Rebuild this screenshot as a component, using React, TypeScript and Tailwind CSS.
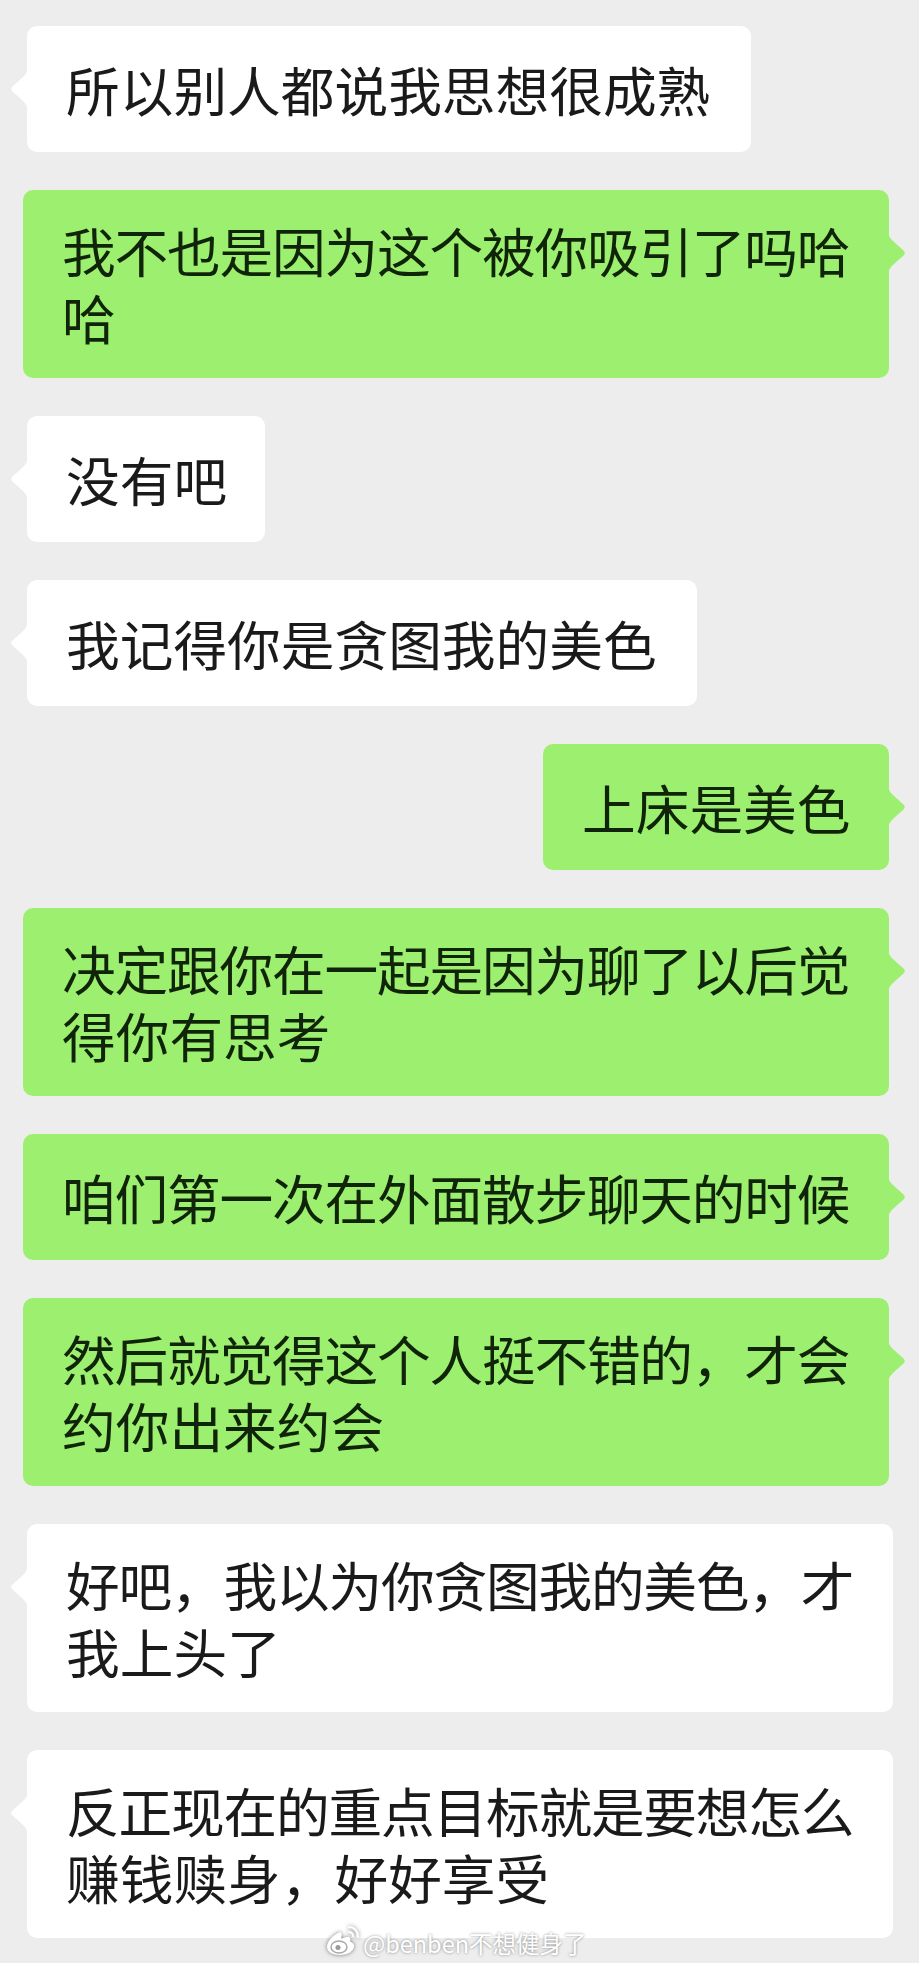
const cjk = "font-['Noto_Sans_CJK_SC','Noto_Sans',sans-serif]";

type Msg = {
    lines: string[];
    me?: boolean;
    width: string;
};

const messages: Msg[] = [
    { lines: ["所以别人都说我思想很成熟"], width: "w-[724px]" },
    { lines: ["我不也是因为这个被你吸引了吗哈", "哈"], me: true, width: "w-[866px]" },
    { lines: ["没有吧"], width: "w-[238px]" },
    { lines: ["我记得你是贪图我的美色"], width: "w-[670px]" },
    { lines: ["上床是美色"], me: true, width: "w-[346px]" },
    { lines: ["决定跟你在一起是因为聊了以后觉", "得你有思考"], me: true, width: "w-[866px]" },
    { lines: ["咱们第一次在外面散步聊天的时候"], me: true, width: "w-[866px]" },
    { lines: ["然后就觉得这个人挺不错的，才会", "约你出来约会"], me: true, width: "w-[866px]" },
    { lines: ["好吧，我以为你贪图我的美色，才", "我上头了"], width: "w-[866px]" },
    { lines: ["反正现在的重点目标就是要想怎么", "赚钱赎身，好好享受"], width: "w-[866px]" },
];

function Tail({ me }: { me?: boolean }) {
    return (
        <svg
            viewBox="0 0 18 40"
            className={me ? "absolute top-[43px] left-full w-[18px] h-[40px] -ml-px" : "absolute top-[43px] right-full w-[18px] h-[40px] -mr-px -scale-x-100"}
        >
            <path
                d="M0 0 C1 4 3 6 6 9 L15.5 17.5 C17.2 19 17.2 21 15.5 22.5 L6 31 C3 34 1 36 0 40 Z"
                fill={me ? "#9def6f" : "#ffffff"}
            />
        </svg>
    );
}

function Bubble({ msg }: { msg: Msg }) {
    return (
        <div className={msg.me ? "flex justify-end pr-[30px]" : "flex pl-[27px]"}>
            <div
                className={`relative ${msg.width} min-h-[126px] rounded-[10px] flex items-center pt-[26px] pb-[28px] pl-[39px] ${msg.me ? "bg-[#9def6f] text-[#0f2408]" : "bg-white text-[#1a1a1a]"}`}
            >
                <Tail me={msg.me} />
                <div className="text-[53.7px] leading-[67px] whitespace-nowrap">
                    {msg.lines.map((line) => (
                        <div key={line} className={line.length === 15 ? "tracking-[-1.2px]" : ""}>
                            {line}
                        </div>
                    ))}
                </div>
            </div>
        </div>
    );
}

function WeiboLogo() {
    return (
        <svg viewBox="0 0 36 32" className="w-[36px] h-[32px] drop-shadow-[0_0_2px_rgba(0,0,0,0.5)]" fill="none">
            <path
                d="M15 7 C8 10 2 16 2 22 C2 27 8 30 15 30 C23 30 29 26 29 21 C29 18 26 17 25 16.5 C26 14 25 12 23 12 C21 11.5 18 13 16 13.5 C17 10 17 8 15 7 Z"
                fill="#ffffff"
            />
            <ellipse cx="14" cy="22" rx="8" ry="6" fill="#ffffff" stroke="#a8a8a8" strokeWidth="1.5" />
            <circle cx="13" cy="22.5" r="2.5" fill="#9a9a9a" />
            <path d="M24 2 C29 2 33 6 33 12" stroke="#ffffff" strokeWidth="2" strokeLinecap="round" />
            <path d="M24 7 C26.5 7 28 9 28 11" stroke="#ffffff" strokeWidth="2" strokeLinecap="round" />
        </svg>
    );
}

export default function App() {
    return (
        <div className={`relative h-[1963px] w-[919px] overflow-hidden bg-[#ededed] ${cjk}`}>
            <div className="flex flex-col gap-[38px] pt-[26px]">
                {messages.map((msg) => (
                    <Bubble key={msg.lines[0]} msg={msg} />
                ))}
            </div>

            {/* watermark */}
            <div className="absolute left-[325px] top-[1923px] flex items-center gap-[2px] text-white text-[23.5px] leading-[32px] [text-shadow:0_0_3px_rgba(0,0,0,0.45)]">
                <WeiboLogo />
                <span className="mt-[4px]">@benben不想健身了</span>
            </div>
        </div>
    );
}
